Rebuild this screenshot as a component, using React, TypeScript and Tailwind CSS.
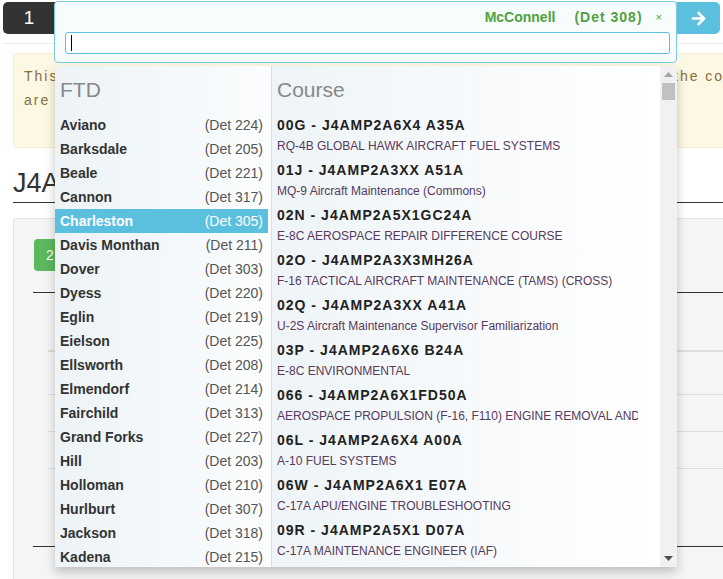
import { ArrowRight } from 'lucide-react';

const ftds = [
  { name: 'Aviano', det: 224 },
  { name: 'Barksdale', det: 205 },
  { name: 'Beale', det: 221 },
  { name: 'Cannon', det: 317 },
  { name: 'Charleston', det: 305 },
  { name: 'Davis Monthan', det: 211 },
  { name: 'Dover', det: 303 },
  { name: 'Dyess', det: 220 },
  { name: 'Eglin', det: 219 },
  { name: 'Eielson', det: 225 },
  { name: 'Ellsworth', det: 208 },
  { name: 'Elmendorf', det: 214 },
  { name: 'Fairchild', det: 313 },
  { name: 'Grand Forks', det: 227 },
  { name: 'Hill', det: 203 },
  { name: 'Holloman', det: 210 },
  { name: 'Hurlburt', det: 307 },
  { name: 'Jackson', det: 318 },
  { name: 'Kadena', det: 215 },
  { name: 'Keesler', det: 304 },
  { name: 'Kunsan', det: 216 },
];

const courses = [
  { code: '00G - J4AMP2A6X4 A35A', title: 'RQ-4B GLOBAL HAWK AIRCRAFT FUEL SYSTEMS' },
  { code: '01J - J4AMP2A3XX A51A', title: 'MQ-9 Aircraft Maintenance (Commons)' },
  { code: '02N - J4AMP2A5X1GC24A', title: 'E-8C AEROSPACE REPAIR DIFFERENCE COURSE' },
  { code: '02O - J4AMP2A3X3MH26A', title: 'F-16 TACTICAL AIRCRAFT MAINTENANCE (TAMS) (CROSS)' },
  { code: '02Q - J4AMP2A3XX A41A', title: 'U-2S Aircraft Maintenance Supervisor Familiarization' },
  { code: '03P - J4AMP2A6X6 B24A', title: 'E-8C ENVIRONMENTAL' },
  { code: '066 - J4AMP2A6X1FD50A', title: 'AEROSPACE PROPULSION (F-16, F110) ENGINE REMOVAL AND INSTALLATION' },
  { code: '06L - J4AMP2A6X4 A00A', title: 'A-10 FUEL SYSTEMS' },
  { code: '06W - J4AMP2A6X1 E07A', title: 'C-17A APU/ENGINE TROUBLESHOOTING' },
  { code: '09R - J4AMP2A5X1 D07A', title: 'C-17A MAINTENANCE ENGINEER (IAF)' },
  { code: '0A1 - J4AMP2A6X2 A10A', title: 'F-15 ELECTRICAL SYSTEMS' },
];

const activeFtd = 'Charleston';

export default function App() {
  return (
    <div className="relative w-[723px] h-[579px] overflow-hidden bg-white font-['Liberation_Sans',Arial,sans-serif] text-[14px] text-[#333]">
      {/* page underneath */}
      <div className="w-[780px]">
        <div className="flex ml-[3px] mt-[2px] w-[717px] h-[32px]">
          <div className="w-[52px] bg-[#333] rounded-l-[5px] flex items-center justify-center text-white text-[19px]">1</div>
          <div className="flex-1 bg-white border border-[#ccc]" />
          <div className="w-[43px] bg-[#5bc0de] rounded-r-[5px] flex items-center justify-center">
            <ArrowRight className="text-white w-[19px] h-[19px]" strokeWidth={3.2} />
          </div>
        </div>
        <div className="ml-[3px] mt-[9px] border-t border-[#eee]" />

        <div className="ml-[13px] mt-[9px] h-[95px] bg-[#fcf8e3] border border-[#faebcc] rounded-[4px] pl-[10px] pt-[10px] text-[#8a6d3b] tracking-[2px] leading-[24px]">
          <div className="whitespace-nowrap flex">
            <span className="inline-block w-[650px] overflow-hidden">This page lists every FTD detachment and the courses taught at each one. Pick</span>
            <span>the course</span>
          </div>
          <div className="whitespace-nowrap">are shown by detachment.</div>
        </div>

        <div className="ml-[13px] mt-[20px] pb-[4px] border-b border-[#333] text-[27px] leading-[30px] whitespace-nowrap">J4AMP2A6X4 A35A</div>

        <div className="ml-[13px] mt-[15px] h-[400px] bg-[#f5f5f5] border border-[#e3e3e3] rounded-[4px] px-[19px] pt-[20px]">
          <div className="ml-[1px] w-[40px] h-[32px] bg-[#5cb85c] rounded-[4px] text-white flex items-center pl-[12px]">2</div>
          <div className="mt-[21px] border-t border-[#333]">
            <div className="h-[57px]" />
            <div className="ml-[15px] border-t-2 border-[#ddd] h-[44px]" />
            <div className="ml-[15px] border-t border-[#ddd] h-[37px]" />
            <div className="ml-[15px] border-t border-[#ddd] h-[37px]" />
            <div className="ml-[15px] border-t border-[#ddd] h-[78px]" />
          </div>
          <div className="border-t border-[#333]" />
        </div>
      </div>

      {/* selected FTD box */}
      <div className="absolute left-[54px] top-[1px] w-[623px] h-[62px] bg-[#f7fcfd] border border-[#7ccbe4] rounded-[4px] pl-[10px] pr-[6px]">
        <div className="h-[30px] flex items-center justify-end pr-[8px] font-bold text-[#4fa23e]">
          <span>McConnell</span>
          <span className="ml-[19px] tracking-[1px]">(Det 308)</span>
          <span className="ml-[13px] text-[11px] font-normal">×</span>
        </div>
        <div className="h-[22px] bg-white border border-[#5bc0de] rounded-[3px] flex items-center pl-[5px]">
          <span className="w-px h-[16px] bg-black" />
        </div>
      </div>

      {/* dropdown */}
      <div className="absolute left-[55px] top-[66px] w-[622px] h-[501px] flex bg-white shadow-[0_5px_10px_rgba(0,0,0,0.22)] overflow-hidden">
        <div className="w-[216px] bg-gradient-to-r from-[#edf3f6] to-[#fbfdfe] pr-[3px]">
          <div className="h-[47px] flex items-center pl-[5px] text-[21px] text-[#888]">FTD</div>
          {ftds.map((f) => (
            <div
              key={f.name}
              className={`h-[24px] flex items-center justify-between px-[5px] ${f.name === activeFtd ? 'bg-[#5bc0de] text-white' : ''}`}
            >
              <span className="font-bold">{f.name}</span>
              <span className={f.name === activeFtd ? 'text-white' : 'text-[#555]'}>(Det {f.det})</span>
            </div>
          ))}
        </div>

        <div className="w-[389px] border-l border-[#ddd] bg-gradient-to-r from-[#eef4f7] to-white pl-[5px] pr-[22px]">
          <div className="h-[47px] flex items-center text-[21px] text-[#888]">Course</div>
          <div className="mt-[2px]">
            {courses.map((c) => (
              <div key={c.code} className="h-[45px]">
                <div className="h-[20px] flex items-center font-bold tracking-[1px] text-[#222] whitespace-nowrap">{c.code}</div>
                <div className="h-[20px] pt-[2px] flex items-center text-[12px] text-[#573a5c] whitespace-nowrap overflow-hidden">{c.title}</div>
              </div>
            ))}
          </div>
        </div>

        <div className="w-[17px] bg-[#f1f1f1] flex flex-col">
          <div className="h-[17px] flex items-center justify-center">
            <svg width="9" height="5" viewBox="0 0 9 5"><polygon points="4.5,0 9,5 0,5" fill="#a3a3a3" /></svg>
          </div>
          <div className="mx-[2px] h-[17px] bg-[#c1c1c1]" />
          <div className="flex-1" />
          <div className="h-[17px] flex items-center justify-center">
            <svg width="9" height="5" viewBox="0 0 9 5"><polygon points="0,0 9,0 4.5,5" fill="#505050" /></svg>
          </div>
        </div>
      </div>
    </div>
  );
}
